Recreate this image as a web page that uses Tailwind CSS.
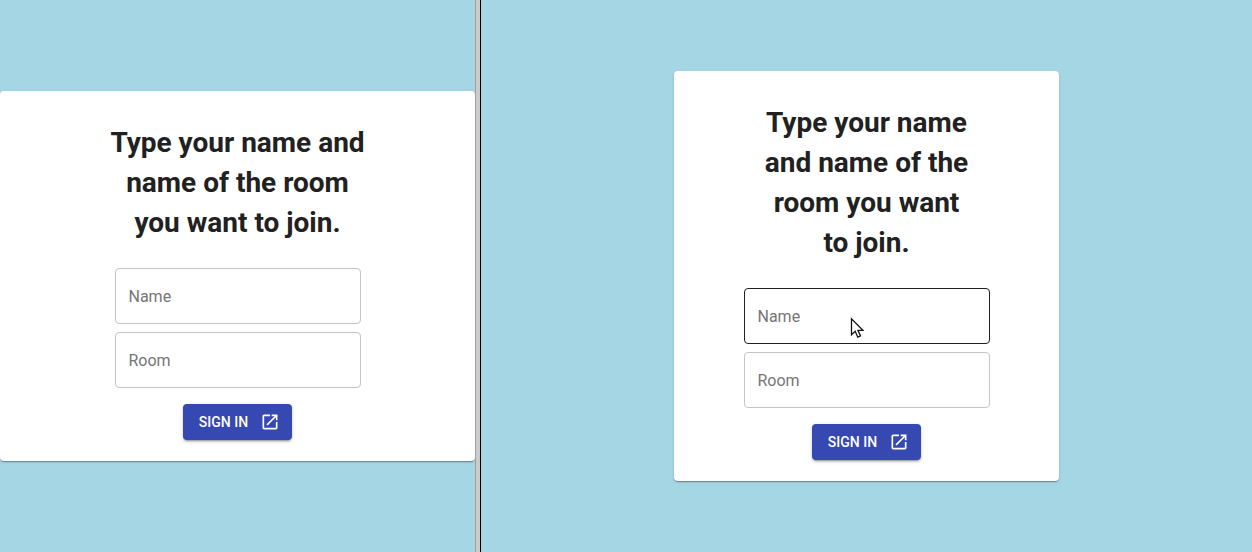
<!DOCTYPE html>
<html lang="en">
<head>
<meta charset="utf-8">
<meta name="viewport" content="width=device-width, initial-scale=1">
<title>Join a room</title>
<script src="https://cdn.jsdelivr.net/npm/@tailwindcss/browser@4"></script>
</head>
<body class="flex min-h-screen bg-[#a5d6e3] font-[Roboto,sans-serif] text-[#212121]">
  <main class="flex w-[37.94%] items-center justify-center overflow-hidden">
    <form class="flex w-full flex-col items-center rounded bg-white px-4 pt-8 pb-[21px] shadow-[0_2px_1px_-1px_rgba(0,0,0,0.2),0_1px_1px_rgba(0,0,0,0.14),0_1px_3px_rgba(0,0,0,0.12)]">
      <h1 class="mb-[25px] max-w-[264px] text-center text-[28px] leading-10 font-bold">Type your name and name of the room you want to join.</h1>
      <div class="flex w-full max-w-[246px] flex-col gap-2">
        <input type="text" aria-label="Name" placeholder="Name" class="h-14 w-full rounded border border-[#c4c4c4] px-[13px] text-base placeholder:text-[#757575] hover:border-[#212121]">
        <input type="text" aria-label="Room" placeholder="Room" class="h-14 w-full rounded border border-[#c4c4c4] px-[13px] text-base placeholder:text-[#757575] hover:border-[#212121]">
      </div>
      <button type="button" class="mt-4 flex h-9 items-center gap-3 rounded bg-[#3648b1] pr-3 pl-4 text-sm font-medium text-white uppercase shadow-[0_3px_1px_-2px_rgba(0,0,0,0.2),0_2px_2px_rgba(0,0,0,0.14),0_1px_5px_rgba(0,0,0,0.12)]">
        <span>Sign in</span>
        <svg class="size-5" viewBox="0 0 24 24" fill="currentColor" aria-hidden="true"><path d="M19 19H5V5h7V3H5c-1.11 0-2 .9-2 2v14c0 1.1.89 2 2 2h14c1.1 0 2-.9 2-2v-7h-2v7zM14 3v2h3.59l-9.83 9.83 1.41 1.41L19 6.41V10h2V3h-7z"/></svg>
      </button>
    </form>
  </main>
  <div class="w-[6px] shrink-0 border-r border-l border-r-black border-l-[#a0a0a0] bg-[#cbcbcb]" role="separator" aria-orientation="vertical"></div>
  <section class="flex flex-1 items-center justify-center">
    <form class="flex w-1/2 flex-col items-center rounded bg-white px-4 pt-8 pb-[21px] shadow-[0_2px_1px_-1px_rgba(0,0,0,0.2),0_1px_1px_rgba(0,0,0,0.14),0_1px_3px_rgba(0,0,0,0.12)]">
      <h2 class="mb-[25px] max-w-[212px] text-center text-[28px] leading-10 font-bold">Type your name and name of the room you want to join.</h2>
      <div class="flex w-full max-w-[246px] flex-col gap-2">
        <div class="relative">
          <input type="text" aria-label="Name" placeholder="Name" class="h-14 w-full rounded border border-[#212121] px-[13px] text-base placeholder:text-[#757575]">
          <svg class="pointer-events-none absolute top-[29px] left-[106px] h-[22px] w-[14px]" viewBox="0 0 14 22" aria-hidden="true"><path d="M1.5 1.8v16l3.7-3.5 2.6 5.9 2.7-1.2-2.5-5.7h4.9z" fill="#fff" stroke="#111" stroke-width="1.3"/></svg>
        </div>
        <input type="text" aria-label="Room" placeholder="Room" class="h-14 w-full rounded border border-[#c4c4c4] px-[13px] text-base placeholder:text-[#757575] hover:border-[#212121]">
      </div>
      <button type="button" class="mt-4 flex h-9 items-center gap-3 rounded bg-[#3648b1] pr-3 pl-4 text-sm font-medium text-white uppercase shadow-[0_3px_1px_-2px_rgba(0,0,0,0.2),0_2px_2px_rgba(0,0,0,0.14),0_1px_5px_rgba(0,0,0,0.12)]">
        <span>Sign in</span>
        <svg class="size-5" viewBox="0 0 24 24" fill="currentColor" aria-hidden="true"><path d="M19 19H5V5h7V3H5c-1.11 0-2 .9-2 2v14c0 1.1.89 2 2 2h14c1.1 0 2-.9 2-2v-7h-2v7zM14 3v2h3.59l-9.83 9.83 1.41 1.41L19 6.41V10h2V3h-7z"/></svg>
      </button>
    </form>
  </section>
</body>
</html>
